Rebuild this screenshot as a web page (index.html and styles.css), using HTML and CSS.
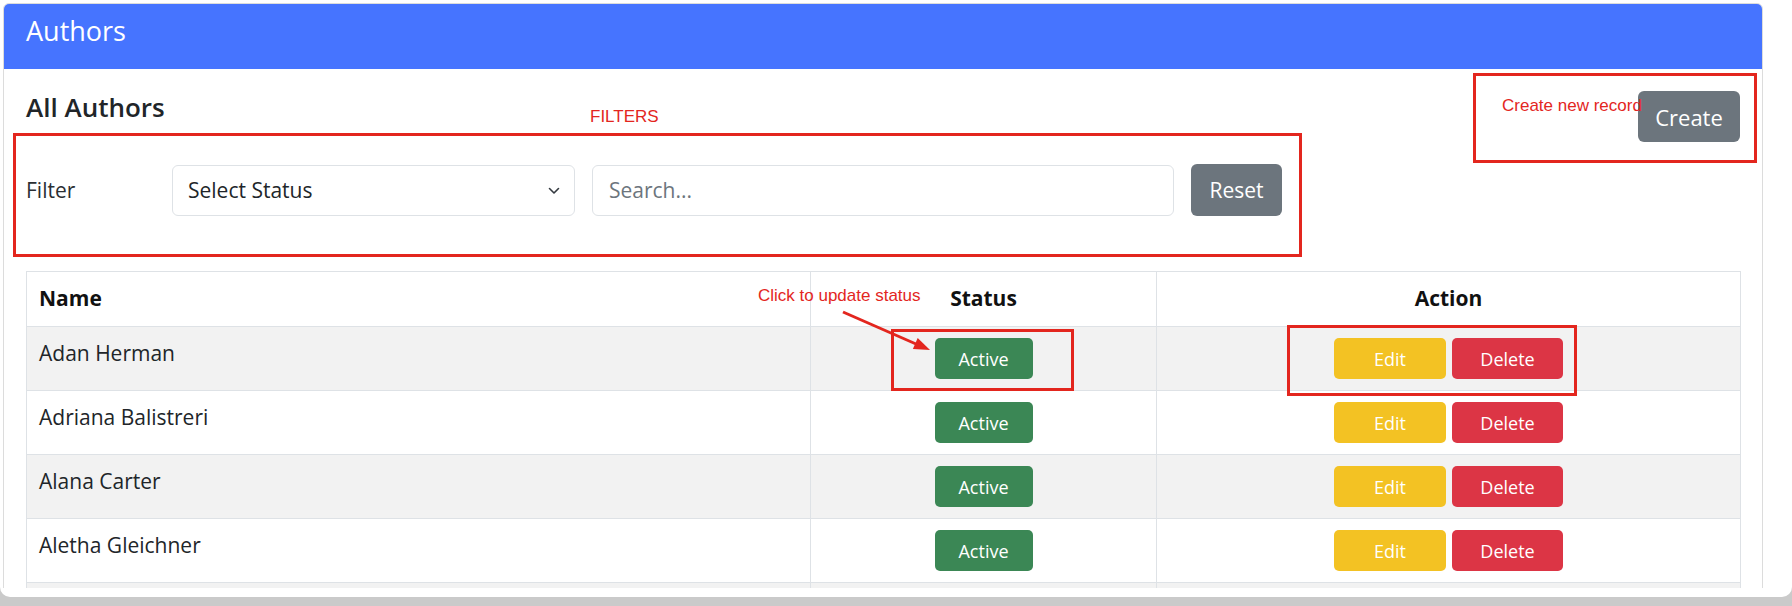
FILE: index.html
```html
<!DOCTYPE html>
<html lang="en">
<head>
<meta charset="utf-8">
<title>Authors</title>
<link rel="stylesheet" href="styles.css">
</head>
<body>
<div class="window">
  <div class="viewport">
    <div class="card">
      <div class="card-header">Authors</div>
      <div class="card-body">
        <div class="toolbar">
          <h2 class="title">All Authors</h2>
          <button class="btn btn-secondary btn-create">Create</button>
        </div>
        <div class="filter-row">
          <label class="filter-label">Filter</label>
          <div class="select-wrap">
            <select class="field select">
              <option>Select Status</option>
            </select>
            <svg class="chevron" width="14" height="10" viewBox="0 0 14 10"><polyline points="2.5,2.5 7,7 11.5,2.5" fill="none" stroke="#343a40" stroke-width="1.6" stroke-linecap="round" stroke-linejoin="round"/></svg>
          </div>
          <input class="field search" type="text" placeholder="Search...">
          <button class="btn btn-secondary btn-reset">Reset</button>
        </div>
        <table class="table">
          <colgroup>
            <col class="col-name">
            <col class="col-status">
            <col class="col-action">
          </colgroup>
          <thead>
            <tr>
              <th class="th-name">Name</th>
              <th class="th-center">Status</th>
              <th class="th-center">Action</th>
            </tr>
          </thead>
          <tbody>
            <tr>
              <td class="name">Adan Herman</td>
              <td class="center"><button class="btn btn-success">Active</button></td>
              <td class="center"><div class="actions"><button class="btn btn-warning">Edit</button><button class="btn btn-danger">Delete</button></div></td>
            </tr>
            <tr>
              <td class="name">Adriana Balistreri</td>
              <td class="center"><button class="btn btn-success">Active</button></td>
              <td class="center"><div class="actions"><button class="btn btn-warning">Edit</button><button class="btn btn-danger">Delete</button></div></td>
            </tr>
            <tr>
              <td class="name">Alana Carter</td>
              <td class="center"><button class="btn btn-success">Active</button></td>
              <td class="center"><div class="actions"><button class="btn btn-warning">Edit</button><button class="btn btn-danger">Delete</button></div></td>
            </tr>
            <tr>
              <td class="name">Aletha Gleichner</td>
              <td class="center"><button class="btn btn-success">Active</button></td>
              <td class="center"><div class="actions"><button class="btn btn-warning">Edit</button><button class="btn btn-danger">Delete</button></div></td>
            </tr>
            <tr class="row-clipped">
              <td class="name"></td>
              <td class="center"></td>
              <td class="center"></td>
            </tr>
          </tbody>
        </table>
      </div>
    </div>
  </div>

  <div class="anno-box box-filters"></div>
  <div class="anno-box box-create"></div>
  <div class="anno-box box-status"></div>
  <div class="anno-box box-action"></div>
  <div class="anno-text text-filters">FILTERS</div>
  <div class="anno-text text-create">Create new record</div>
  <div class="anno-text text-click">Click to update status</div>
  <svg class="anno-arrow" width="100" height="50" viewBox="0 0 100 50">
    <line x1="5" y1="6" x2="78" y2="38" stroke="#e3261e" stroke-width="3"/>
    <polygon points="92,44 74.9,43.1 79.7,32.1" fill="#e3261e"/>
  </svg>
</div>
</body>
</html>
```

FILE: styles.css
```css
* { box-sizing: border-box; }

html, body {
  margin: 0;
  padding: 0;
}

body {
  background: #cacaca;
  font-family: "Open Sans", "Noto Sans", sans-serif;
  color: #212529;
}

.window {
  position: relative;
  width: 1792px;
  height: 597px;
  background: #ffffff;
  border-radius: 0 0 10px 10px;
  overflow: hidden;
}

.viewport {
  height: 588px;
  overflow: hidden;
  padding: 3px 0 0 3px;
}

.card {
  width: 1760px;
  border: 1px solid #dcdcdc;
  border-radius: 6px 6px 0 0;
  background: #fff;
}

.card-header {
  height: 65px;
  padding: 11px 22px 0;
  background: #4674ff;
  color: #fff;
  font-size: 27px;
  line-height: 32px;
  border-radius: 5px 5px 0 0;
}

.card-body {
  padding: 22px 22px 0 22px;
}

.toolbar {
  display: flex;
  justify-content: space-between;
  align-items: flex-start;
  height: 51px;
}

.title {
  margin: 0;
  font-size: 26px;
  line-height: 32px;
  font-weight: 600;
  color: #212529;
}

.btn {
  display: inline-flex;
  align-items: center;
  justify-content: center;
  border: none;
  color: #fff;
  font-family: "Open Sans", "Noto Sans", sans-serif;
  padding: 0;
  border-radius: 5px;
}

.btn-secondary { background: #6c757d; }

.btn-create {
  width: 102px;
  height: 51px;
  font-size: 22px;
  border-radius: 6px;
}

.filter-row {
  margin-top: 22px;
  display: grid;
  grid-template-columns: 129px 403px 582px 91px;
  column-gap: 17px;
  align-items: center;
  height: 52px;
}

.filter-label {
  font-size: 21px;
  line-height: 30px;
  color: #2b2f33;
}

.select-wrap {
  position: relative;
  height: 51px;
}

.field {
  width: 100%;
  height: 51px;
  border: 1px solid #dee2e6;
  border-radius: 6px;
  background: #fff;
  font-family: "Open Sans", "Noto Sans", sans-serif;
  font-size: 21px;
  color: #212529;
  outline: none;
}

.select {
  appearance: none;
  -webkit-appearance: none;
  padding: 0 40px 0 15px;
}

.chevron {
  position: absolute;
  right: 14px;
  top: 21px;
}

.search {
  padding: 0 16px;
}

.search::placeholder {
  color: #6c757d;
}

.btn-reset {
  width: 91px;
  height: 52px;
  font-size: 21px;
  border-radius: 6px;
}

.table {
  margin-top: 55px;
  width: 1714px;
  border-collapse: collapse;
  border: 1px solid #dee2e6;
  table-layout: fixed;
  font-size: 21px;
}

.col-name { width: 784px; }
.col-status { width: 346px; }
.col-action { width: 584px; }

.table th,
.table td {
  border: 1px solid #dee2e6;
  border-top: none;
  line-height: 30px;
  vertical-align: top;
}

.table th {
  padding: 11px 12px 13px;
  font-weight: 700;
  color: #111;
}

.th-name { text-align: left; }
.th-center { text-align: center; }

.table td {
  padding: 11px 12px;
}

.table tbody tr:nth-child(odd) td {
  background: #f2f2f2;
}

.table td.center {
  text-align: center;
  vertical-align: middle;
}

.table tbody tr td {
  border-top: 1px solid #dee2e6;
}

.row-clipped td {
  height: 64px;
}

.name {
  color: #212529;
}

.btn-success,
.btn-warning,
.btn-danger {
  height: 41px;
  font-size: 18px;
  vertical-align: top;
}

.btn-success {
  width: 98px;
  background: #3b8755;
}

.actions {
  display: flex;
  justify-content: center;
  gap: 6px;
}

.btn-warning {
  width: 112px;
  background: #f3c223;
}

.btn-danger {
  width: 111px;
  background: #dc3545;
}

/* annotations drawn over the screenshot */
.anno-box {
  position: absolute;
  border: 3px solid #e3261e;
}

.box-filters { left: 13px; top: 133px; width: 1289px; height: 124px; }
.box-create  { left: 1473px; top: 73px; width: 284px; height: 90px; }
.box-status  { left: 891px; top: 329px; width: 183px; height: 62px; }
.box-action  { left: 1287px; top: 325px; width: 290px; height: 71px; }

.anno-text {
  position: absolute;
  font-family: "Liberation Sans", Arial, sans-serif;
  font-size: 17px;
  line-height: 17px;
  color: #e3261e;
  white-space: nowrap;
}

.text-filters { left: 590px; top: 108px; }
.text-create  { left: 1502px; top: 97px; }
.text-click   { left: 758px; top: 287px; }

.anno-arrow {
  position: absolute;
  left: 838px;
  top: 306px;
}
```
